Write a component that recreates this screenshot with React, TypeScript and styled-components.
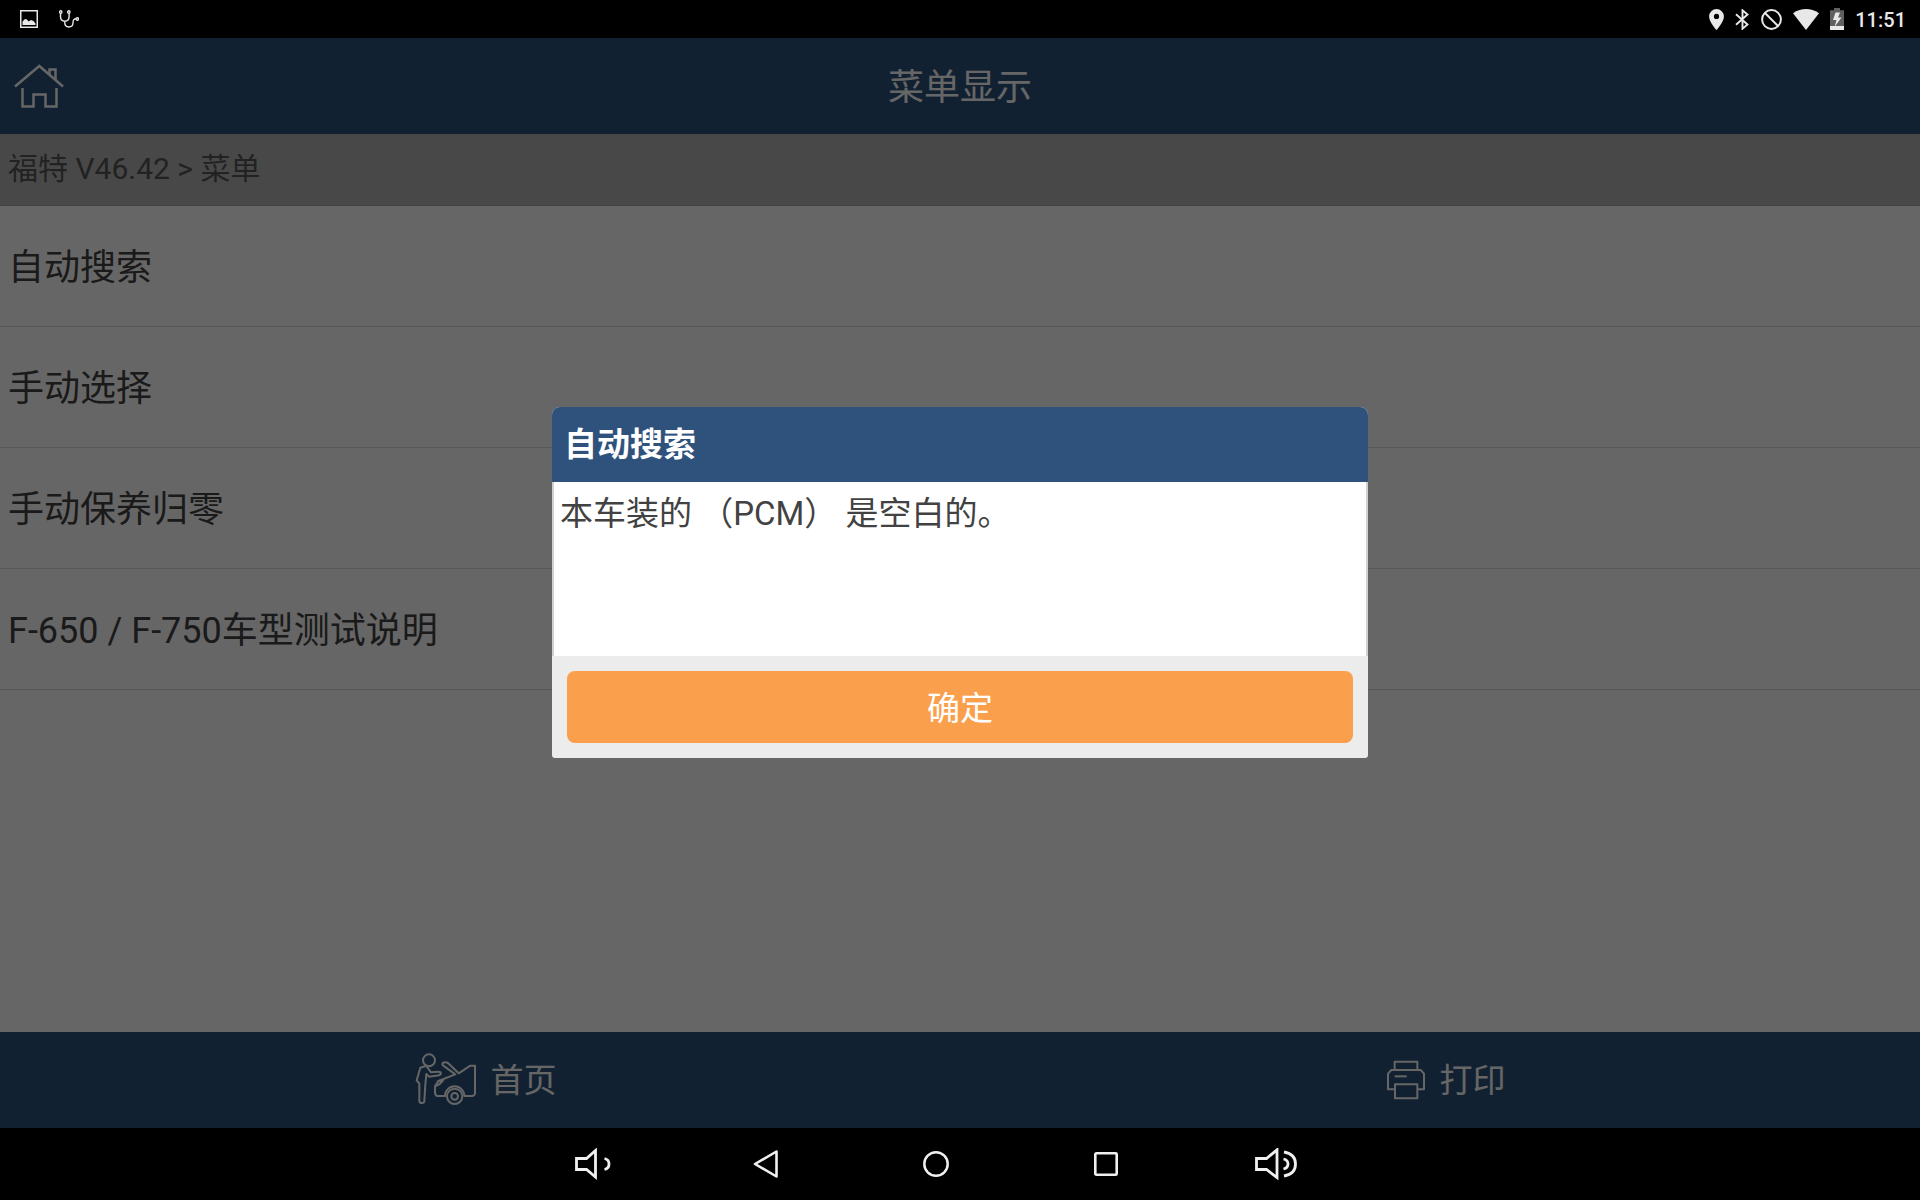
import React from "react";
import styled, { createGlobalStyle } from "styled-components";

const GlobalStyle = createGlobalStyle`
  *, *::before, *::after { box-sizing: border-box; }
  body { margin: 0; background: #000; }
  button { font: inherit; color: inherit; border: 0; padding: 0; background: none; cursor: pointer; }
  svg { display: block; flex: none; }
`;

const Screen = styled.div`
  display: flex;
  flex-direction: column;
  min-height: 100vh;
  font-family: Roboto, "Noto Sans CJK SC", sans-serif;
  background: #000;
`;

const StatusBar = styled.div`
  display: flex;
  align-items: center;
  justify-content: space-between;
  height: 38px;
  padding: 0 13px 0 20px;
  color: #e8e8e8;
`;

const StatusGroup = styled.div<{ $gap: number }>`
  display: flex;
  align-items: center;
  gap: ${(p) => p.$gap}px;
`;

const Clock = styled.time`
  padding: 2px 1px 0 0;
  font-size: 20px;
  line-height: 24px;
  font-weight: 500;
`;

const AppArea = styled.div`
  position: relative;
  flex: 1;
  display: flex;
  flex-direction: column;
  background: #fff;
`;

const Header = styled.header`
  display: grid;
  grid-template-columns: 80px 1fr 80px;
  align-items: center;
  height: 96px;
  background: #2c537c;
  color: #fff;
`;

const HomeButton = styled.button`
  padding-left: 14px;
`;

const Title = styled.h1`
  margin: 0;
  padding-top: 4px;
  font-size: 36px;
  line-height: 48px;
  font-weight: 400;
  text-align: center;
`;

const Breadcrumb = styled.nav`
  height: 72px;
  padding: 0 8px;
  font-size: 30px;
  line-height: 70px;
  color: #555;
  background: #b4b4b4;
  border-bottom: 1px solid #a4a4a4;
`;

const MenuList = styled.ul`
  flex: 1;
  margin: 0;
  padding: 0;
  list-style: none;
`;

const MenuRow = styled.button`
  display: block;
  width: 100%;
  height: 121px;
  padding: 4px 8px 0;
  font-size: 36px;
  line-height: 48px;
  text-align: left;
  color: #424242;
  border-bottom: 1px solid #dcdcdc;
`;

const Toolbar = styled.footer`
  display: grid;
  grid-template-columns: 1fr 1fr;
  height: 96px;
  background: #2c537c;
  color: #fff;
`;

const ToolButton = styled.button`
  display: flex;
  align-items: center;
  justify-content: center;
  gap: 15px;
  font-size: 33px;
  line-height: 48px;
`;

const ToolLabel = styled.span`
  padding-top: 2px;
`;

const Overlay = styled.div`
  position: absolute;
  inset: 0;
  display: flex;
  align-items: center;
  justify-content: center;
  padding-bottom: 2px;
  background: rgba(0, 0, 0, 0.6);
`;

const Dialog = styled.section`
  width: 816px;
  max-width: 90%;
  border-radius: 8px 8px 3px 3px;
  overflow: hidden;
  background: #ececec;
  font-size: 33px;
  line-height: 48px;
`;

const DialogTitle = styled.h2`
  margin: 0;
  padding: 14px 12px 13px;
  font-size: 33px;
  line-height: 48px;
  font-weight: 700;
  color: #fff;
  background: #2f527d;
`;

const DialogBody = styled.p`
  min-height: 174px;
  margin: 0;
  padding: 8px 6px;
  color: #424242;
  background: #fff;
  border: solid #d0d0d0;
  border-width: 0 2px;
`;

const DialogFooter = styled.div`
  padding: 15px;
`;

const ConfirmButton = styled.button`
  display: block;
  width: 100%;
  height: 72px;
  padding-top: 4px;
  border-radius: 8px;
  color: #fff;
  background: #fa9f4c;
`;

const NavBar = styled.nav`
  display: flex;
  justify-content: center;
  height: 72px;
  padding-right: 48px;
  color: #f0f0f0;
`;

const NavButton = styled.button`
  display: flex;
  align-items: center;
  justify-content: center;
  width: 170px;
`;

const PictureIcon = () => (
  <svg width="18" height="18" viewBox="0 0 18 18" aria-hidden="true">
    <rect x="0.75" y="0.75" width="16.5" height="16.5" fill="none" stroke="currentColor" strokeWidth="1.5" />
    <path d="M2.500 15V11.500l2.500-2.500 2 .5 1.500 2 2.500-1.500 2.500 1 2 2.500V15z" fill="currentColor" />
  </svg>
);

const StethoscopeIcon = () => (
  <svg width="20" height="18" viewBox="0 0 20 18" fill="none" stroke="currentColor" strokeWidth="1.400" aria-hidden="true">
    <circle cx="1.700" cy="2" r="1.200" />
    <circle cx="9.800" cy="2" r="1.200" />
    <circle cx="18.300" cy="9" r="1.200" />
    <path d="M1.500 3.200v3.300q0 4.500 4.300 4.800 4.300-.3 4.300-4.800V3.200M5.800 11.300v1.500c0 5.500 8 5.500 8.200.2 0-3 .5-4.200 3.200-4.200" />
  </svg>
);

const LocationIcon = () => (
  <svg width="15" height="21" viewBox="0 0 15 21" aria-hidden="true">
    <path fillRule="evenodd" fill="currentColor" d="M7.500 0A7.400 7.400 0 0 0 .1 7.400C.1 12.800 7.500 21 7.500 21s7.400-8.200 7.400-13.600A7.400 7.400 0 0 0 7.500 0zm0 4.800a2.600 2.600 0 1 1 0 5.200 2.600 2.600 0 0 1 0-5.200z" />
  </svg>
);

const BluetoothIcon = () => (
  <svg width="15" height="21" viewBox="0 0 15 21" fill="none" stroke="currentColor" strokeWidth="1.900" aria-hidden="true">
    <path d="M1 5.200l11.500 10.300-5 4.200V1.300l5 4.200L1 15.800" />
  </svg>
);

const BlockedIcon = () => (
  <svg width="21" height="21" viewBox="0 0 21 21" fill="none" stroke="currentColor" strokeWidth="2" aria-hidden="true">
    <circle cx="10.500" cy="10.500" r="9.400" />
    <path d="M4 4l13 13" />
  </svg>
);

const WifiIcon = () => (
  <svg width="26" height="21" viewBox="0 0 26 21" aria-hidden="true">
    <path d="M0 4.200Q13-4.200 26 4.200L13 21z" fill="currentColor" />
  </svg>
);

const BatteryIcon = () => (
  <svg width="14" height="22" viewBox="0 0 14 22" aria-hidden="true">
    <path d="M4 0h6v2.200h4V22H0V2.200h4z" fill="#606060" />
    <path d="M0 18h14v4H0z" fill="currentColor" />
    <path d="M10 4.500H5.500L3 12h3.500L4.500 19 11.500 9.500H8z" fill="currentColor" />
  </svg>
);

const HouseIcon = () => (
  <svg width="50" height="44" viewBox="0 0 50 44" fill="none" stroke="currentColor" strokeWidth="2.500" aria-hidden="true">
    <path d="M1 22.500L25.300 2 49 22.500" />
    <path d="M35.500 10.500V5.500h6V16" />
    <path d="M8.500 24v18.500h11V30.500h12v12h11V24" />
  </svg>
);

const CarServiceIcon = () => (
  <svg width="72" height="54" viewBox="9 69 216 162" fill="none" stroke="currentColor" strokeWidth="6" strokeLinejoin="round" strokeLinecap="round" aria-hidden="true">
    <circle cx="84" cy="91" r="18" />
    <path d="M72 109L58 113 47 151 55 161V213Q56 219 63 219 70 219 70 213L73 164 76 132 84 140 114 136Q122 133 119 127 115 124 90 127L78 111" />
    <path d="M129 198H108Q102 196 102 186V169L112 153 163 133 131 110Q122 106 125 99 131 95 141 99L173 130 208 107H222V191Q221 197 214 198H192" />
    <path d="M103 168Q116 165 126 151M112 154L126 151" />
    <path d="M132 198A29 29 0 0 1 190 198" />
    <circle cx="161" cy="199" r="23" />
    <circle cx="161" cy="199" r="10" />
  </svg>
);

const PrinterIcon = () => (
  <svg width="50" height="42" viewBox="42 87 150 126" fill="none" stroke="currentColor" strokeWidth="6" strokeLinejoin="round" aria-hidden="true">
    <path d="M101 118V95H169V118" />
    <path d="M100 178H81V131L91 120H179L189 131V178H171" />
    <path d="M102 163H169V205H102z" />
    <path d="M101 139H137" />
  </svg>
);

const VolumeDownIcon = () => (
  <svg width="42" height="32" viewBox="0 0 42 32" fill="none" stroke="currentColor" strokeWidth="2.800" aria-hidden="true">
    <path d="M1.500 10.500H11.500L20.500 2.500V29L11.500 21.500H1.500z" />
    <path d="M29.500 10.500Q34 11.500 34 16T29.500 21.500" />
  </svg>
);

const BackIcon = () => (
  <svg width="26" height="30" viewBox="0 0 26 30" fill="none" stroke="currentColor" strokeWidth="2.600" strokeLinejoin="round" aria-hidden="true">
    <path d="M23.500 2.500V27.500L2 15z" />
  </svg>
);

const CircleIcon = () => (
  <svg width="26" height="26" viewBox="0 0 26 26" fill="none" stroke="currentColor" strokeWidth="2.500" aria-hidden="true">
    <circle cx="13" cy="13" r="11.700" />
  </svg>
);

const SquareIcon = () => (
  <svg width="24" height="24" viewBox="0 0 24 24" fill="none" stroke="currentColor" strokeWidth="2.600" aria-hidden="true">
    <rect x="1.300" y="1.300" width="21.400" height="21.400" rx="1" />
  </svg>
);

const VolumeUpIcon = () => (
  <svg width="42" height="32" viewBox="0 0 42 32" fill="none" stroke="currentColor" strokeWidth="2.800" aria-hidden="true">
    <path d="M1.500 10.500H11.500L22 1.800V29.500L11.500 21.500H1.500z" />
    <path d="M28.500 11Q33 12 33 16T28.500 21" />
    <path d="M29 4Q40.500 6 40.500 16T29 28" />
  </svg>
);

const menuItems = ["自动搜索", "手动选择", "手动保养归零", "F-650 / F-750车型测试说明"];

const navItems = [
  { label: "降低音量", Icon: VolumeDownIcon },
  { label: "返回", Icon: BackIcon },
  { label: "主屏幕", Icon: CircleIcon },
  { label: "最近任务", Icon: SquareIcon },
  { label: "提高音量", Icon: VolumeUpIcon },
];

export default function App() {
  return (
    <Screen lang="zh-CN">
      <GlobalStyle />
      <StatusBar>
        <StatusGroup $gap={21}>
          <PictureIcon />
          <StethoscopeIcon />
        </StatusGroup>
        <StatusGroup $gap={11}>
          <LocationIcon />
          <BluetoothIcon />
          <BlockedIcon />
          <WifiIcon />
          <BatteryIcon />
          <Clock>11:51</Clock>
        </StatusGroup>
      </StatusBar>

      <AppArea>
        <Header>
          <HomeButton aria-label="主页">
            <HouseIcon />
          </HomeButton>
          <Title>菜单显示</Title>
        </Header>
        <Breadcrumb>福特 V46.42 &gt; 菜单</Breadcrumb>
        <MenuList>
          {menuItems.map((item) => (
            <li key={item}>
              <MenuRow>{item}</MenuRow>
            </li>
          ))}
        </MenuList>
        <Toolbar>
          <ToolButton>
            <CarServiceIcon />
            <ToolLabel>首页</ToolLabel>
          </ToolButton>
          <ToolButton>
            <PrinterIcon />
            <ToolLabel>打印</ToolLabel>
          </ToolButton>
        </Toolbar>

        <Overlay>
          <Dialog role="dialog" aria-modal="true" aria-labelledby="dialog-title">
            <DialogTitle id="dialog-title">自动搜索</DialogTitle>
            <DialogBody>本车装的 （PCM） 是空白的。</DialogBody>
            <DialogFooter>
              <ConfirmButton>确定</ConfirmButton>
            </DialogFooter>
          </Dialog>
        </Overlay>
      </AppArea>

      <NavBar>
        {navItems.map(({ label, Icon }) => (
          <NavButton key={label} aria-label={label}>
            <Icon />
          </NavButton>
        ))}
      </NavBar>
    </Screen>
  );
}
